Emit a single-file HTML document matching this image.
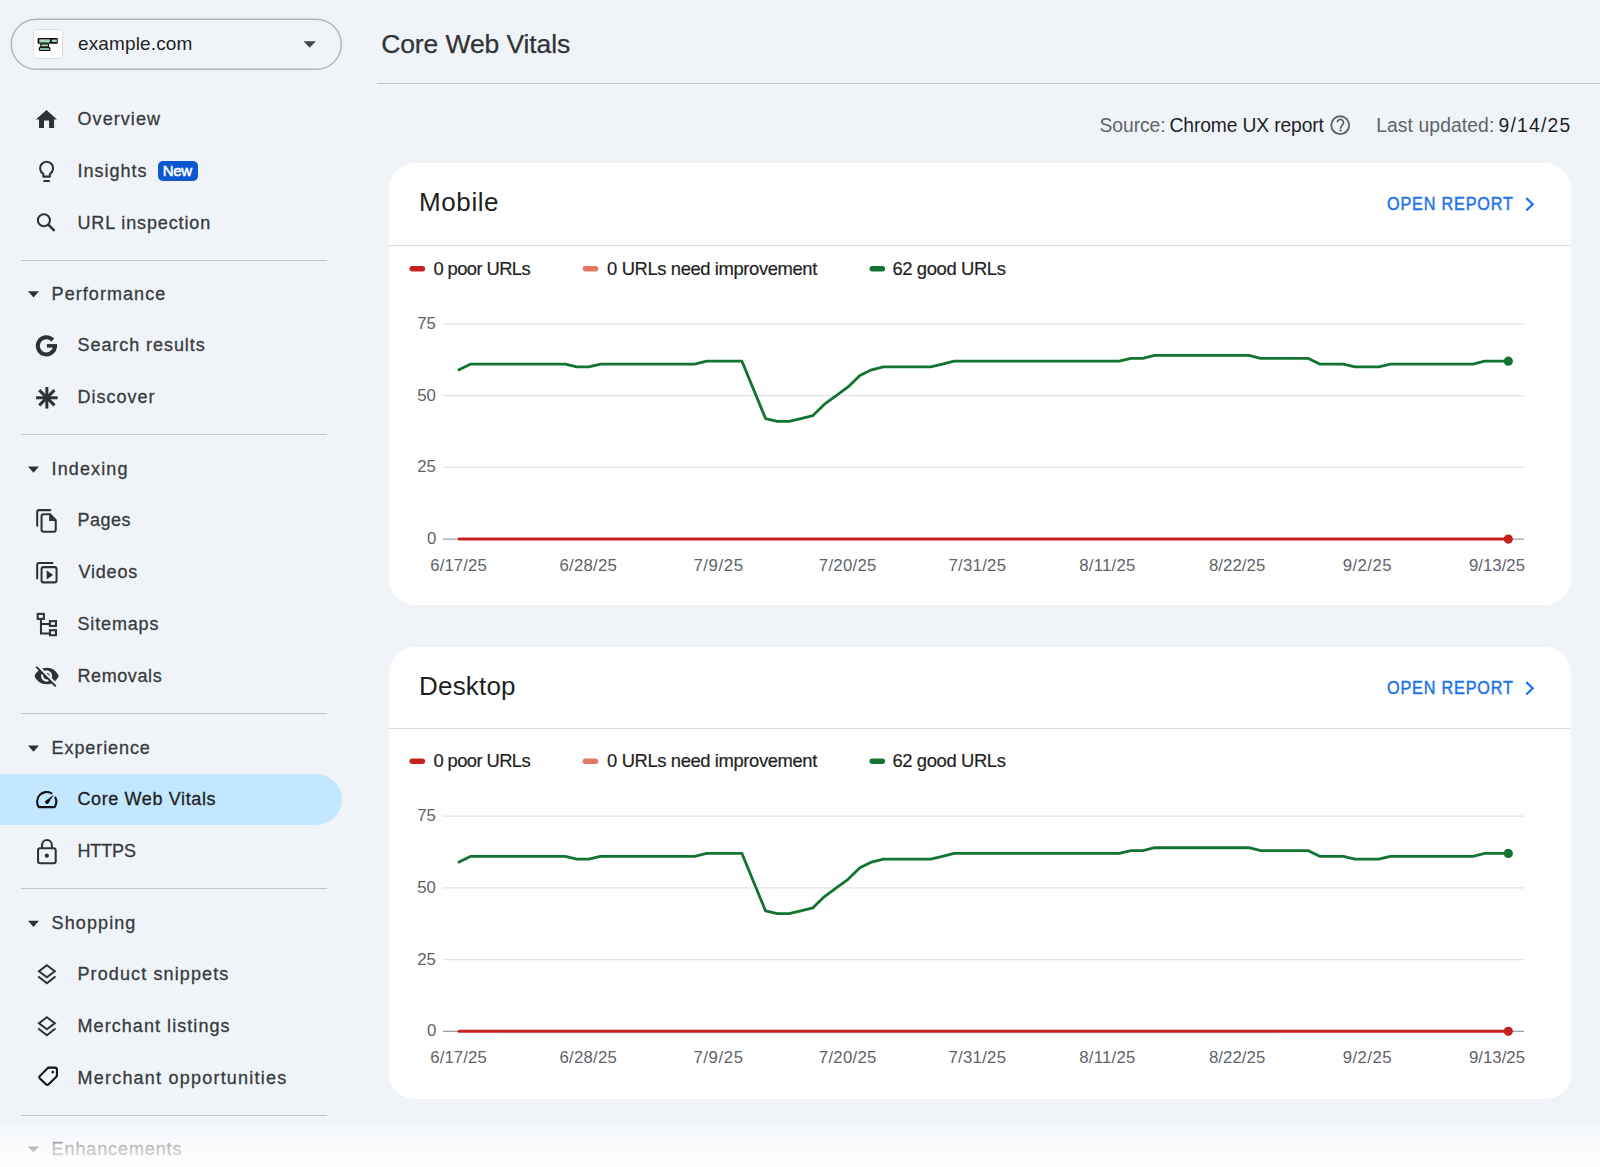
<!DOCTYPE html>
<html><head><meta charset="utf-8"><title>Core Web Vitals</title>
<style>
html,body{margin:0;padding:0}
body{width:1600px;height:1167px;overflow:hidden;background:#f0f4f9;position:relative;font-family:"Liberation Sans",sans-serif}
.t{position:absolute;white-space:pre;line-height:normal}
.abs{position:absolute}
</style></head><body>

<div class="abs" style="left:32.5px;top:29.2px;width:28.6px;height:27.6px;background:#fff;border:0.8px solid #dcdcdc;border-radius:3px"></div>
<div class="abs" style="left:0;top:774px;width:341.5px;height:51.2px;background:#c2e7ff;border-radius:0 25.6px 25.6px 0"></div>
<div class="abs" style="left:157.5px;top:160.5px;width:40.2px;height:20.7px;background:#0b57d0;border-radius:5px"></div>
<div class="abs" style="left:21px;top:259.5px;width:305.5px;height:1.2px;background:#c4c7c5"></div>
<div class="abs" style="left:21px;top:434px;width:305.5px;height:1.2px;background:#c4c7c5"></div>
<div class="abs" style="left:21px;top:712.5px;width:305.5px;height:1.2px;background:#c4c7c5"></div>
<div class="abs" style="left:21px;top:887.5px;width:305.5px;height:1.2px;background:#c4c7c5"></div>
<div class="abs" style="left:21px;top:1114.5px;width:305.5px;height:1.2px;background:#c4c7c5"></div>
<div class="abs" style="left:377px;top:82.6px;width:1223px;height:1.2px;background:#c4c7c5"></div>
<div class="abs" style="left:388.6px;top:163px;width:1182.2px;height:441.7px;background:#fff;border-radius:26px"></div>
<div class="abs" style="left:388.6px;top:647px;width:1182.2px;height:451.5px;background:#fff;border-radius:26px"></div>
<div class="abs" style="left:389px;top:244.6px;width:1181px;height:1.2px;background:#dadce0"></div>
<div class="abs" style="left:389px;top:728px;width:1181px;height:1.2px;background:#dadce0"></div>
<svg class="abs" style="left:0;top:0" width="1600" height="1167" viewBox="0 0 1600 1167">
<rect x="11.25" y="19.25" width="330" height="50" rx="25" fill="none" stroke="#b4b7b8" stroke-width="1.5"/>
<g><rect x="37.6" y="38.1" width="20.2" height="5.6" rx="1" fill="#111"/><rect x="39.3" y="39.3" width="10.6" height="3.2" fill="#a8d5b4"/><rect x="51.8" y="39.6" width="5" height="2.4" fill="#a8d5b4"/><rect x="40.2" y="43.5" width="8.8" height="3.8" rx="0.8" fill="#111"/><rect x="41.3" y="44.5" width="6.6" height="1.8" fill="#a8d5b4"/><rect x="38.8" y="47" width="11.6" height="4" rx="1" fill="#111"/><rect x="40" y="48" width="9.2" height="2" fill="#88b898"/></g>
<path d="M303.5 41.3 H315.9 L309.7 47.8 Z" fill="#444746"/>
<path d="M28 291.3 H39 L33.5 297.5 Z" fill="#2f3133"/>
<path d="M28 466.5 H39 L33.5 472.7 Z" fill="#2f3133"/>
<path d="M28 745.5 H39 L33.5 751.7 Z" fill="#2f3133"/>
<path d="M28 920.7 H39 L33.5 926.9 Z" fill="#2f3133"/>
<path d="M28 1146.4 H39 L33.5 1152.6 Z" fill="#2f3133"/>
<path d="M46.45 109.9 L57 119.6 L54.1 119.6 L54.1 128.1 L49.06 128.1 L49.06 120.5 L44 120.5 L44 128.1 L39 128.1 L39 119.6 L35.9 119.6 Z" fill="#2f3133"/>
<path d="M43.3 176.6 V173.8 A6.5 6.5 0 1 1 49.9 173.8 V176.6 Z" fill="none" stroke="#2f3133" stroke-width="2.05" stroke-linejoin="round"/>
<path d="M44.1 181 H49.1" stroke="#2f3133" stroke-width="1.9" stroke-linecap="round"/>
<circle cx="43.9" cy="220.2" r="6" fill="none" stroke="#2f3133" stroke-width="2.05"/>
<path d="M48.3 224.6 L54.6 230.9" stroke="#2f3133" stroke-width="2.5"/>
<path d="M55.00 345.85 A8.6 8.6 0 1 1 52.79 340.10" fill="none" stroke="#2f3133" stroke-width="4"/>
<rect x="46.9" y="344.05" width="10.1" height="3.6" fill="#2f3133"/>
<path d="M36.06 397.77 L57.66 397.77" stroke="#2f3133" stroke-width="3"/>
<path d="M39.22 390.13 L54.50 405.41" stroke="#2f3133" stroke-width="3"/>
<path d="M46.86 386.97 L46.86 408.57" stroke="#2f3133" stroke-width="3"/>
<path d="M54.50 390.13 L39.22 405.41" stroke="#2f3133" stroke-width="3"/>
<path d="M37.2 525.7 V512.1 Q37.2 510.1 39.2 510.1 H50.4" fill="none" stroke="#2f3133" stroke-width="2.05" stroke-linecap="round"/>
<path d="M43.56 514.3 H50 L55.73 520.2 V529.65 Q55.73 531.65 53.73 531.65 H43.56 Q41.56 531.65 41.56 529.65 V516.3 Q41.56 514.3 43.56 514.3 Z" fill="none" stroke="#2f3133" stroke-width="2.05"/>
<path d="M49.1 514.3 V521.1 H55.8 Z" fill="#2f3133"/>
<path d="M37.2 578.5 V564.9 Q37.2 562.9 39.2 562.9 H52.5" fill="none" stroke="#2f3133" stroke-width="2.05" stroke-linecap="round"/>
<rect x="41.56" y="567.1" width="15" height="15.3" rx="2" fill="none" stroke="#2f3133" stroke-width="2.05"/>
<path d="M46.7 570.3 V579.6 L53 574.95 Z" fill="#2f3133"/>
<rect x="37.7" y="613.9" width="6.2" height="5" fill="none" stroke="#2f3133" stroke-width="2.05"/>
<rect x="49.9" y="621.1" width="6.1" height="4.8" fill="none" stroke="#2f3133" stroke-width="2.05"/>
<rect x="49.9" y="630.25" width="6.1" height="4.95" fill="none" stroke="#2f3133" stroke-width="2.05"/>
<path d="M40.97 619.9 V633.4 H49.9 M40.97 624 H49.9" fill="none" stroke="#2f3133" stroke-width="2.05"/>
<g transform="translate(46.6 676.65) scale(1.1) translate(-12 -12.5)"><path fill="#2f3133" d="M12 7c2.76 0 5 2.24 5 5 0 .65-.13 1.26-.36 1.83l2.92 2.92c1.51-1.26 2.7-2.89 3.430-4.75-1.73-4.39-6-7.5-11-7.5-1.4 0-2.74.25-3.98.7l2.16 2.16C10.74 7.13 11.35 7 12 7zM2 4.27l2.28 2.28.46.46C3.08 8.3 1.78 10.02 1 12c1.73 4.39 6 7.5 11 7.5 1.55 0 3.03-.3 4.38-.84l.42.42L19.73 22 21 20.73 3.27 3 2 4.27zM7.53 9.8l1.55 1.55c-.05.21-.08.43-.08.65 0 1.66 1.34 3 3 3 .22 0 .44-.03.65-.08l1.55 1.550c-.67.33-1.41.53-2.2.53-2.76 0-5-2.24-5-5 0-.79.2-1.53.53-2.2zm4.31-.78l3.15 3.15.02-.16c0-1.66-1.34-3-3-3l-.17.01z"/></g>
<path d="M51.5 793.3 A9.6 9.6 0 0 0 38.83 807.1 H54.57 A9.6 9.6 0 0 0 55.37 797.5" fill="none" stroke="#111" stroke-width="2.1" stroke-linecap="round" stroke-linejoin="round"/>
<path d="M53.8 794.8 L48.3 803.5 A1.95 1.95 0 0 1 45.3 801.1 Z" fill="#111"/>
<rect x="38.05" y="848.25" width="17.65" height="14.9" rx="2" fill="none" stroke="#2f3133" stroke-width="2.05"/>
<path d="M42.05 848.25 V844.95 A4.9 4.9 0 0 1 51.85 844.95 V848.25" fill="none" stroke="#2f3133" stroke-width="2.05"/>
<circle cx="46.86" cy="855.7" r="2.1" fill="#2f3133"/>
<path d="M46.86 965.3 L54.8 971.3 L46.86 977.3 L39 971.3 Z" fill="none" stroke="#2f3133" stroke-width="2.05" stroke-linejoin="miter"/>
<path d="M38.9 977 L46.86 983.2 L54.8 977" fill="none" stroke="#2f3133" stroke-width="2.05" stroke-linecap="round"/>
<path d="M46.86 1017.3 L54.8 1023.3 L46.86 1029.3 L39 1023.3 Z" fill="none" stroke="#2f3133" stroke-width="2.05" stroke-linejoin="miter"/>
<path d="M38.9 1029 L46.86 1035.2 L54.8 1029" fill="none" stroke="#2f3133" stroke-width="2.05" stroke-linecap="round"/>
<path d="M48.3 1067.6 H54.9 Q56.9 1067.6 56.9 1069.6 V1075.4 Q56.9 1076.2 56.3 1076.8 L48.7 1084.3 Q47.3 1085.6 45.9 1084.3 L39.9 1078.5 Q38.6 1077.2 39.9 1075.9 L47.3 1068.5 Q48.1 1067.6 48.9 1067.6 Z" fill="none" stroke="#111" stroke-width="2.1" stroke-linejoin="round"/>
<circle cx="52.76" cy="1072.06" r="1.35" fill="#111"/>
<circle cx="1340.2" cy="125.15" r="8.95" fill="none" stroke="#5f6368" stroke-width="1.9"/>
<path d="M1337.3 122.4 A3.1 3.1 0 1 1 1342.4 124.9 Q1340.5 126.5 1340.5 128.7" fill="none" stroke="#5f6368" stroke-width="1.75"/>
<circle cx="1340.5" cy="130.6" r="1.1" fill="#5f6368"/>
<path d="M1526.3 198.1 L1532.7 204.3 L1526.3 210.5" fill="none" stroke="#1a73e8" stroke-width="2.2"/>
<path d="M1526.3 682.1 L1532.7 688.3 L1526.3 694.5" fill="none" stroke="#1a73e8" stroke-width="2.2"/>
<rect x="409.5" y="266.00" width="15.6" height="5.4" rx="2.7" fill="#c5221f"/>
<rect x="582.7" y="266.00" width="15.6" height="5.4" rx="2.7" fill="#e07a62"/>
<rect x="869.5" y="266.00" width="15.6" height="5.4" rx="2.7" fill="#137333"/>
<rect x="409.5" y="758.50" width="15.6" height="5.4" rx="2.7" fill="#c5221f"/>
<rect x="582.7" y="758.50" width="15.6" height="5.4" rx="2.7" fill="#e07a62"/>
<rect x="869.5" y="758.50" width="15.6" height="5.4" rx="2.7" fill="#137333"/>
<line x1="443" y1="323.87" x2="1524" y2="323.87" stroke="#e3e3e3" stroke-width="1.2"/>
<line x1="443" y1="395.60" x2="1524" y2="395.60" stroke="#e3e3e3" stroke-width="1.2"/>
<line x1="443" y1="467.32" x2="1524" y2="467.32" stroke="#e3e3e3" stroke-width="1.2"/>
<line x1="443" y1="539.05" x2="1524" y2="539.05" stroke="#9aa0a6" stroke-width="1.2"/>
<polyline points="459.00,369.78 470.79,364.04 482.58,364.04 494.37,364.04 506.16,364.04 517.95,364.04 529.74,364.04 541.53,364.04 553.32,364.04 565.11,364.04 576.90,366.91 588.69,366.91 600.48,364.04 612.27,364.04 624.06,364.04 635.85,364.04 647.64,364.04 659.43,364.04 671.22,364.04 683.01,364.04 694.80,364.04 706.59,361.17 718.38,361.17 730.17,361.17 741.96,361.17 753.75,389.86 765.54,418.55 777.33,421.42 789.12,421.42 800.91,418.55 812.70,415.68 824.49,404.21 836.28,395.60 848.07,386.99 859.86,375.52 871.65,369.78 883.44,366.91 895.23,366.91 907.02,366.91 918.81,366.91 930.60,366.91 942.39,364.04 954.18,361.17 965.97,361.17 977.76,361.17 989.55,361.17 1001.34,361.17 1013.13,361.17 1024.92,361.17 1036.71,361.17 1048.50,361.17 1060.29,361.17 1072.08,361.17 1083.87,361.17 1095.66,361.17 1107.45,361.17 1119.24,361.17 1131.03,358.30 1142.82,358.30 1154.61,355.43 1166.40,355.43 1178.19,355.43 1189.98,355.43 1201.77,355.43 1213.56,355.43 1225.35,355.43 1237.14,355.43 1248.93,355.43 1260.72,358.30 1272.51,358.30 1284.30,358.30 1296.09,358.30 1307.88,358.30 1319.67,364.04 1331.46,364.04 1343.25,364.04 1355.04,366.91 1366.83,366.91 1378.62,366.91 1390.41,364.04 1402.20,364.04 1413.99,364.04 1425.78,364.04 1437.57,364.04 1449.36,364.04 1461.15,364.04 1472.94,364.04 1484.73,361.17 1496.52,361.17 1508.31,361.17" fill="none" stroke="#137333" stroke-width="2.8" stroke-linejoin="round" stroke-linecap="round"/>
<line x1="459" y1="539.05" x2="1508.3" y2="539.05" stroke="#c5221f" stroke-width="3" stroke-linecap="round"/>
<circle cx="1508.31" cy="361.17" r="4.6" fill="#137333"/>
<circle cx="1508.31" cy="539.05" r="4.6" fill="#c5221f"/>
<line x1="443" y1="816.17" x2="1524" y2="816.17" stroke="#e3e3e3" stroke-width="1.2"/>
<line x1="443" y1="887.90" x2="1524" y2="887.90" stroke="#e3e3e3" stroke-width="1.2"/>
<line x1="443" y1="959.62" x2="1524" y2="959.62" stroke="#e3e3e3" stroke-width="1.2"/>
<line x1="443" y1="1031.35" x2="1524" y2="1031.35" stroke="#9aa0a6" stroke-width="1.2"/>
<polyline points="459.00,862.08 470.79,856.34 482.58,856.34 494.37,856.34 506.16,856.34 517.95,856.34 529.74,856.34 541.53,856.34 553.32,856.34 565.11,856.34 576.90,859.21 588.69,859.21 600.48,856.34 612.27,856.34 624.06,856.34 635.85,856.34 647.64,856.34 659.43,856.34 671.22,856.34 683.01,856.34 694.80,856.34 706.59,853.47 718.38,853.47 730.17,853.47 741.96,853.47 753.75,882.16 765.54,910.85 777.33,913.72 789.12,913.72 800.91,910.85 812.70,907.98 824.49,896.51 836.28,887.90 848.07,879.29 859.86,867.82 871.65,862.08 883.44,859.21 895.23,859.21 907.02,859.21 918.81,859.21 930.60,859.21 942.39,856.34 954.18,853.47 965.97,853.47 977.76,853.47 989.55,853.47 1001.34,853.47 1013.13,853.47 1024.92,853.47 1036.71,853.47 1048.50,853.47 1060.29,853.47 1072.08,853.47 1083.87,853.47 1095.66,853.47 1107.45,853.47 1119.24,853.47 1131.03,850.60 1142.82,850.60 1154.61,847.73 1166.40,847.73 1178.19,847.73 1189.98,847.73 1201.77,847.73 1213.56,847.73 1225.35,847.73 1237.14,847.73 1248.93,847.73 1260.72,850.60 1272.51,850.60 1284.30,850.60 1296.09,850.60 1307.88,850.60 1319.67,856.34 1331.46,856.34 1343.25,856.34 1355.04,859.21 1366.83,859.21 1378.62,859.21 1390.41,856.34 1402.20,856.34 1413.99,856.34 1425.78,856.34 1437.57,856.34 1449.36,856.34 1461.15,856.34 1472.94,856.34 1484.73,853.47 1496.52,853.47 1508.31,853.47" fill="none" stroke="#137333" stroke-width="2.8" stroke-linejoin="round" stroke-linecap="round"/>
<line x1="459" y1="1031.35" x2="1508.3" y2="1031.35" stroke="#c5221f" stroke-width="3" stroke-linecap="round"/>
<circle cx="1508.31" cy="853.47" r="4.6" fill="#137333"/>
<circle cx="1508.31" cy="1031.35" r="4.6" fill="#c5221f"/>
</svg>
<span class="t" style="left:78.00px;top:33.00px;font-size:19px;font-weight:400;color:#1f1f1f;letter-spacing:0.130px;">example.com</span>
<span class="t" style="left:77.50px;top:109.40px;font-size:18px;font-weight:400;color:#383b3d;letter-spacing:1.071px;-webkit-text-stroke:0.3px #383b3d;">Overview</span>
<span class="t" style="left:77.50px;top:161.40px;font-size:18px;font-weight:400;color:#383b3d;letter-spacing:1.000px;-webkit-text-stroke:0.3px #383b3d;">Insights</span>
<span class="t" style="left:77.50px;top:213.40px;font-size:18px;font-weight:400;color:#383b3d;letter-spacing:0.869px;-webkit-text-stroke:0.3px #383b3d;">URL inspection</span>
<span class="t" style="left:51.60px;top:283.90px;font-size:18px;font-weight:400;color:#383b3d;letter-spacing:1.060px;-webkit-text-stroke:0.3px #383b3d;">Performance</span>
<span class="t" style="left:77.50px;top:335.40px;font-size:18px;font-weight:400;color:#383b3d;letter-spacing:0.938px;-webkit-text-stroke:0.3px #383b3d;">Search results</span>
<span class="t" style="left:77.50px;top:387.40px;font-size:18px;font-weight:400;color:#383b3d;letter-spacing:0.986px;-webkit-text-stroke:0.3px #383b3d;">Discover</span>
<span class="t" style="left:51.60px;top:458.90px;font-size:18px;font-weight:400;color:#383b3d;letter-spacing:1.114px;-webkit-text-stroke:0.3px #383b3d;">Indexing</span>
<span class="t" style="left:77.50px;top:510.40px;font-size:18px;font-weight:400;color:#383b3d;letter-spacing:0.500px;-webkit-text-stroke:0.3px #383b3d;">Pages</span>
<span class="t" style="left:78.50px;top:562.40px;font-size:18px;font-weight:400;color:#383b3d;letter-spacing:0.800px;-webkit-text-stroke:0.3px #383b3d;">Videos</span>
<span class="t" style="left:77.50px;top:614.40px;font-size:18px;font-weight:400;color:#383b3d;letter-spacing:0.843px;-webkit-text-stroke:0.3px #383b3d;">Sitemaps</span>
<span class="t" style="left:77.50px;top:666.40px;font-size:18px;font-weight:400;color:#383b3d;letter-spacing:0.586px;-webkit-text-stroke:0.3px #383b3d;">Removals</span>
<span class="t" style="left:51.60px;top:737.90px;font-size:18px;font-weight:400;color:#383b3d;letter-spacing:0.911px;-webkit-text-stroke:0.3px #383b3d;">Experience</span>
<span class="t" style="left:77.50px;top:789.40px;font-size:18px;font-weight:400;color:#1f1f1f;letter-spacing:0.614px;-webkit-text-stroke:0.3px #1f1f1f;">Core Web Vitals</span>
<span class="t" style="left:77.50px;top:841.40px;font-size:18px;font-weight:400;color:#383b3d;letter-spacing:-0.150px;-webkit-text-stroke:0.3px #383b3d;">HTTPS</span>
<span class="t" style="left:51.60px;top:912.90px;font-size:18px;font-weight:400;color:#383b3d;letter-spacing:1.100px;-webkit-text-stroke:0.3px #383b3d;">Shopping</span>
<span class="t" style="left:77.50px;top:964.40px;font-size:18px;font-weight:400;color:#383b3d;letter-spacing:1.113px;-webkit-text-stroke:0.3px #383b3d;">Product snippets</span>
<span class="t" style="left:77.50px;top:1016.40px;font-size:18px;font-weight:400;color:#383b3d;letter-spacing:1.062px;-webkit-text-stroke:0.3px #383b3d;">Merchant listings</span>
<span class="t" style="left:77.50px;top:1068.40px;font-size:18px;font-weight:400;color:#383b3d;letter-spacing:1.219px;-webkit-text-stroke:0.3px #383b3d;">Merchant opportunities</span>
<span class="t" style="left:51.60px;top:1138.90px;font-size:18px;font-weight:400;color:#383b3d;letter-spacing:0.891px;-webkit-text-stroke:0.3px #383b3d;">Enhancements</span>
<span class="t" style="left:162.70px;top:161.90px;font-size:15px;font-weight:400;color:#ffffff;letter-spacing:-0.300px;-webkit-text-stroke:0.5px #ffffff;">New</span>
<span class="t" style="left:381.20px;top:29.30px;font-size:26.5px;font-weight:400;color:#303336;letter-spacing:-0.107px;-webkit-text-stroke:0.25px #303336;">Core Web Vitals</span>
<span class="t" style="left:1099.50px;top:115.30px;font-size:19.3px;font-weight:400;color:#5f6368;letter-spacing:-0.050px;">Source:</span>
<span class="t" style="left:1169.60px;top:115.30px;font-size:19.3px;font-weight:400;color:#1f1f1f;letter-spacing:-0.147px;">Chrome UX report</span>
<span class="t" style="left:1376.20px;top:115.20px;font-size:19.3px;font-weight:400;color:#5f6368;letter-spacing:0.100px;">Last updated:</span>
<span class="t" style="left:1498.60px;top:115.20px;font-size:19.3px;font-weight:400;color:#1f1f1f;letter-spacing:1.200px;">9/14/25</span>
<span class="t" style="left:419.10px;top:186.90px;font-size:26px;font-weight:400;color:#1f1f1f;letter-spacing:0.580px;">Mobile</span>
<span class="t" style="left:1386.80px;top:193.90px;font-size:18px;font-weight:400;color:#1a73e8;letter-spacing:0.922px;-webkit-text-stroke:0.45px #1a73e8;transform:scaleX(0.9);transform-origin:0 0;">OPEN REPORT</span>
<span class="t" style="left:433.50px;top:257.70px;font-size:18.4px;font-weight:400;color:#1f1f1f;letter-spacing:-0.610px;-webkit-text-stroke:0.2px #1f1f1f;">0 poor URLs</span>
<span class="t" style="left:607.10px;top:257.70px;font-size:18.4px;font-weight:400;color:#1f1f1f;letter-spacing:-0.391px;-webkit-text-stroke:0.2px #1f1f1f;">0 URLs need improvement</span>
<span class="t" style="left:892.40px;top:257.70px;font-size:18.4px;font-weight:400;color:#1f1f1f;letter-spacing:-0.373px;-webkit-text-stroke:0.2px #1f1f1f;">62 good URLs</span>
<span class="t" style="left:417.25px;top:313.97px;font-size:16.8px;font-weight:400;color:#5f6368;letter-spacing:-0.150px;">75</span>
<span class="t" style="left:417.25px;top:385.70px;font-size:16.8px;font-weight:400;color:#5f6368;letter-spacing:-0.150px;">50</span>
<span class="t" style="left:417.25px;top:457.42px;font-size:16.8px;font-weight:400;color:#5f6368;letter-spacing:-0.150px;">25</span>
<span class="t" style="left:427.00px;top:529.15px;font-size:16.8px;font-weight:400;color:#5f6368;letter-spacing:0.000px;">0</span>
<span class="t" style="left:430.25px;top:555.75px;font-size:16.8px;font-weight:400;color:#5f6368;letter-spacing:0.083px;">6/17/25</span>
<span class="t" style="left:559.44px;top:555.75px;font-size:16.8px;font-weight:400;color:#5f6368;letter-spacing:0.250px;">6/28/25</span>
<span class="t" style="left:693.38px;top:555.75px;font-size:16.8px;font-weight:400;color:#5f6368;letter-spacing:0.600px;">7/9/25</span>
<span class="t" style="left:818.82px;top:555.75px;font-size:16.8px;font-weight:400;color:#5f6368;letter-spacing:0.250px;">7/20/25</span>
<span class="t" style="left:948.51px;top:555.75px;font-size:16.8px;font-weight:400;color:#5f6368;letter-spacing:0.250px;">7/31/25</span>
<span class="t" style="left:1079.20px;top:555.75px;font-size:16.8px;font-weight:400;color:#5f6368;letter-spacing:0.250px;">8/11/25</span>
<span class="t" style="left:1208.89px;top:555.75px;font-size:16.8px;font-weight:400;color:#5f6368;letter-spacing:0.083px;">8/22/25</span>
<span class="t" style="left:1342.83px;top:555.75px;font-size:16.8px;font-weight:400;color:#5f6368;letter-spacing:0.400px;">9/2/25</span>
<span class="t" style="left:1469.00px;top:555.75px;font-size:16.8px;font-weight:400;color:#5f6368;letter-spacing:0.000px;">9/13/25</span>
<span class="t" style="left:419.10px;top:670.90px;font-size:26px;font-weight:400;color:#1f1f1f;letter-spacing:0.167px;">Desktop</span>
<span class="t" style="left:1386.80px;top:677.90px;font-size:18px;font-weight:400;color:#1a73e8;letter-spacing:0.922px;-webkit-text-stroke:0.45px #1a73e8;transform:scaleX(0.9);transform-origin:0 0;">OPEN REPORT</span>
<span class="t" style="left:433.50px;top:750.00px;font-size:18.4px;font-weight:400;color:#1f1f1f;letter-spacing:-0.610px;-webkit-text-stroke:0.2px #1f1f1f;">0 poor URLs</span>
<span class="t" style="left:607.10px;top:750.00px;font-size:18.4px;font-weight:400;color:#1f1f1f;letter-spacing:-0.391px;-webkit-text-stroke:0.2px #1f1f1f;">0 URLs need improvement</span>
<span class="t" style="left:892.40px;top:750.00px;font-size:18.4px;font-weight:400;color:#1f1f1f;letter-spacing:-0.373px;-webkit-text-stroke:0.2px #1f1f1f;">62 good URLs</span>
<span class="t" style="left:417.25px;top:806.27px;font-size:16.8px;font-weight:400;color:#5f6368;letter-spacing:-0.150px;">75</span>
<span class="t" style="left:417.25px;top:878.00px;font-size:16.8px;font-weight:400;color:#5f6368;letter-spacing:-0.150px;">50</span>
<span class="t" style="left:417.25px;top:949.72px;font-size:16.8px;font-weight:400;color:#5f6368;letter-spacing:-0.150px;">25</span>
<span class="t" style="left:427.00px;top:1021.45px;font-size:16.8px;font-weight:400;color:#5f6368;letter-spacing:0.000px;">0</span>
<span class="t" style="left:430.25px;top:1048.05px;font-size:16.8px;font-weight:400;color:#5f6368;letter-spacing:0.083px;">6/17/25</span>
<span class="t" style="left:559.44px;top:1048.05px;font-size:16.8px;font-weight:400;color:#5f6368;letter-spacing:0.250px;">6/28/25</span>
<span class="t" style="left:693.38px;top:1048.05px;font-size:16.8px;font-weight:400;color:#5f6368;letter-spacing:0.600px;">7/9/25</span>
<span class="t" style="left:818.82px;top:1048.05px;font-size:16.8px;font-weight:400;color:#5f6368;letter-spacing:0.250px;">7/20/25</span>
<span class="t" style="left:948.51px;top:1048.05px;font-size:16.8px;font-weight:400;color:#5f6368;letter-spacing:0.250px;">7/31/25</span>
<span class="t" style="left:1079.20px;top:1048.05px;font-size:16.8px;font-weight:400;color:#5f6368;letter-spacing:0.250px;">8/11/25</span>
<span class="t" style="left:1208.89px;top:1048.05px;font-size:16.8px;font-weight:400;color:#5f6368;letter-spacing:0.083px;">8/22/25</span>
<span class="t" style="left:1342.83px;top:1048.05px;font-size:16.8px;font-weight:400;color:#5f6368;letter-spacing:0.400px;">9/2/25</span>
<span class="t" style="left:1469.00px;top:1048.05px;font-size:16.8px;font-weight:400;color:#5f6368;letter-spacing:0.000px;">9/13/25</span>
<div class="abs" style="left:0;top:1121px;width:1600px;height:46px;background:linear-gradient(to bottom, rgba(255,255,255,0), rgba(255,255,255,0.4) 28%, rgba(255,255,255,0.68) 58%, rgba(255,255,255,0.92))"></div>
</body></html>
